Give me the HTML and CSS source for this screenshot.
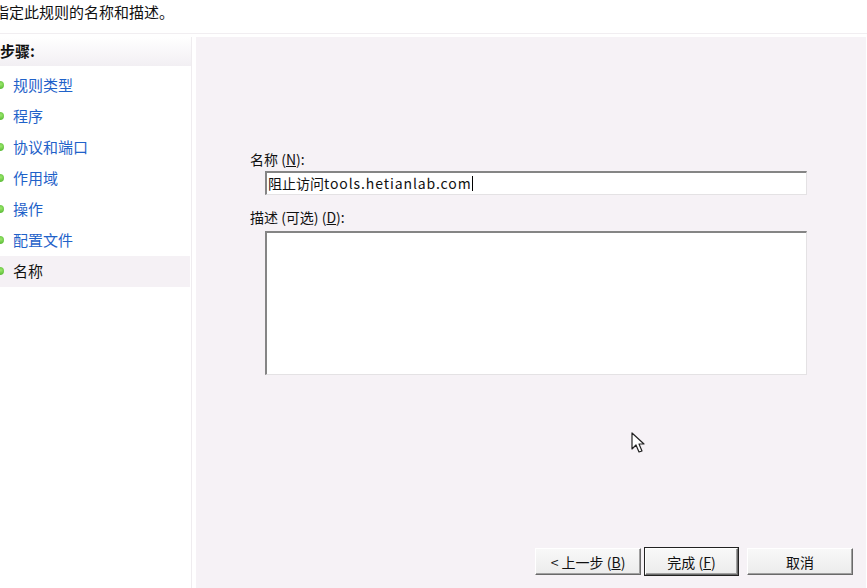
FILE: index.html
```html
<!DOCTYPE html>
<html lang="zh-CN">
<head>
  <meta charset="UTF-8" />
  <title>新建入站规则向导</title>
  <link rel="stylesheet" href="styles.css">
</head>
<body>
  <div class="title">指定此规则的名称和描述。</div>

  <div class="main">
    <div class="steps">
      <div class="steps-head">步骤:</div>
      <ul class="step-list">
        <li class="step">规则类型</li>
        <li class="step">程序</li>
        <li class="step">协议和端口</li>
        <li class="step">作用域</li>
        <li class="step">操作</li>
        <li class="step">配置文件</li>
        <li class="step current">名称</li>
      </ul>
    </div>

    <div class="content">
      <div class="form">
        <label class="field-label">名称 (<u>N</u>):</label>
        <div class="textbox">阻止访问<span class="latin">tools.hetianlab.com</span><span class="caret"></span></div>
        <label class="field-label">描述 (可选) (<u>D</u>):</label>
        <div class="textbox area"></div>
      </div>

      <div class="buttons">
        <button class="btn">&lt; 上一步 (<u>B</u>)</button>
        <button class="btn default">完成 (<u>F</u>)</button>
        <button class="btn cancel">取消</button>
      </div>

      <svg class="pointer" width="14" height="22" viewBox="0 0 14 22">
        <path d="M1 1 L1 17 L5 13 L8 20 L11 19 L8 12 L13 12 Z" fill="#fff" stroke="#222" stroke-width="1.2" stroke-linejoin="round"/>
      </svg>
    </div>
  </div>
</body>
</html>
```

FILE: styles.css
```css
* {
  box-sizing: border-box;
  margin: 0;
  padding: 0;
}
body {
  font-family: "Noto Sans CJK SC", "Liberation Sans", sans-serif;
  font-size: 14px;
  color: #111;
  background: #fff;
  width: 867px;
  height: 588px;
  overflow: hidden;
}
.title {
  height: 34px;
  line-height: 24px;
  font-size: 15px;
  margin-left: -6px;
  border-bottom: 1px solid #f1eef1;
}
.main {
  display: flex;
  gap: 4px;
  height: 554px;
  padding-top: 3px;
}
.steps {
  width: 192px;
  border-right: 1px solid #efecef;
  background: #fff;
}
.steps-head {
  height: 29px;
  line-height: 28px;
  font-weight: bold;
  font-size: 15px;
  background: linear-gradient(to bottom, #fff, #f2eff3);
}
.step-list {
  list-style: none;
  margin-top: 4px;
}
.step {
  height: 31px;
  line-height: 30px;
  font-size: 15px;
  color: #1f62c9;
  padding-left: 13px;
  position: relative;
}
.step::before {
  content: '';
  position: absolute;
  left: -4px;
  top: 11px;
  width: 8px;
  height: 8px;
  border-radius: 50%;
  background: radial-gradient(circle at 60% 40%, #9be86c, #3aa51c);
}
.step.current {
  color: #111;
  background: #f5f1f5;
  margin-right: 1px;
}
.content {
  flex: 1;
  background: #f6f2f6;
  margin-right: 1px;
  display: flex;
  flex-direction: column;
  position: relative;
}
.form {
  padding: 113px 0 0 54px;
  display: flex;
  flex-direction: column;
}
.field-label {
  height: 19px;
  line-height: 19px;
  font-size: 14px;
}
.textbox {
  width: 542px;
  height: 24px;
  margin: 2px 0 0 15px;
  background: #fff;
  border-top: 2px solid #858585;
  border-left: 2px solid #858585;
  border-right: 1px solid #e4e2e4;
  border-bottom: 1px solid #e4e2e4;
  line-height: 20px;
  font-size: 14px;
  padding-left: 1px;
}
.latin {
  letter-spacing: 0.9px;
}
.textbox + .field-label {
  margin-top: 13px;
}
.caret {
  display: inline-block;
  width: 1px;
  height: 15px;
  background: #000;
  vertical-align: -2px;
}
.textbox.area {
  height: 144px;
  margin-top: 4px;
}
.buttons {
  margin-top: auto;
  display: flex;
  justify-content: flex-end;
  align-items: center;
  padding: 0 13px 13px 0;
}
.btn {
  font-family: inherit;
  font-size: 14px;
  width: 106px;
  height: 27px;
  background: linear-gradient(to bottom, #f8f8f8, #ececec);
  border: 1px solid;
  border-color: #fff #6a6a6a #6a6a6a #fff;
  box-shadow: inset -1px -1px #a0a0a0;
  color: #111;
}
.btn.default {
  width: 93px;
  margin-left: 4px;
  outline: 1px solid #222;
  outline-offset: 0;
}
.btn.cancel {
  margin-left: 9px;
}
.pointer {
  position: absolute;
  left: 435px;
  top: 395px;
}
```
